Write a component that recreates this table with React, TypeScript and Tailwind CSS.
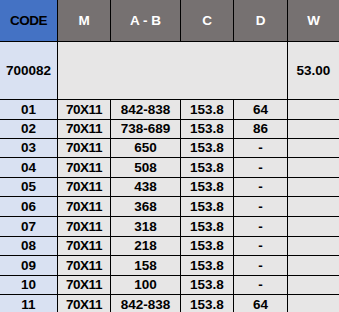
const rows = [
  { code: '01', m: '70X11', ab: '842-838', c: '153.8', d: '64', h: 'h-[19px]' },
  { code: '02', m: '70X11', ab: '738-689', c: '153.8', d: '86', h: 'h-[18px]' },
  { code: '03', m: '70X11', ab: '650', c: '153.8', d: '-', h: 'h-[18px]' },
  { code: '04', m: '70X11', ab: '508', c: '153.8', d: '-', h: 'h-[19px]' },
  { code: '05', m: '70X11', ab: '438', c: '153.8', d: '-', h: 'h-[18px]' },
  { code: '06', m: '70X11', ab: '368', c: '153.8', d: '-', h: 'h-[19px]' },
  { code: '07', m: '70X11', ab: '318', c: '153.8', d: '-', h: 'h-[19px]' },
  { code: '08', m: '70X11', ab: '218', c: '153.8', d: '-', h: 'h-[18px]' },
  { code: '09', m: '70X11', ab: '158', c: '153.8', d: '-', h: 'h-[19px]' },
  { code: '10', m: '70X11', ab: '100', c: '153.8', d: '-', h: 'h-[18px]' },
  { code: '11', m: '70X11', ab: '842-838', c: '153.8', d: '64', h: 'h-[19px]' },
];

const cell = 'flex items-center justify-center';

export default function App() {
  return (
    <div className="w-[339px] h-[312px] overflow-hidden bg-white font-['Liberation_Sans',Arial,sans-serif] text-[13.5px] font-bold leading-none text-black">
      <div className="grid grid-cols-[57px_52px_69px_52px_53px_51px] gap-px bg-black">
        {/* header */}
        <div className={`${cell} h-[41px] bg-[#4472C4] tracking-[-0.5px]`}>CODE</div>
        <div className={`${cell} bg-[#767171] text-white`}>M</div>
        <div className={`${cell} bg-[#767171] text-white`}>A - B</div>
        <div className={`${cell} bg-[#767171] text-white`}>C</div>
        <div className={`${cell} bg-[#767171] text-white`}>D</div>
        <div className={`${cell} bg-[#767171] text-white`}>W</div>

        {/* kit row */}
        <div className={`${cell} h-[57px] bg-[#D9E1F2]`}>700082</div>
        <div className="col-span-4 bg-[#E7E6E6]" />
        <div className={`${cell} bg-[#E7E6E6]`}>53.00</div>

        {rows.map((r) => (
          <div key={r.code} className="contents">
            <div className={`${cell} ${r.h} bg-[#D9E1F2]`}>{r.code}</div>
            <div className={`${cell} bg-[#E7E6E6] tracking-[-0.5px]`}>{r.m}</div>
            <div className={`${cell} bg-[#E7E6E6]`}>{r.ab}</div>
            <div className={`${cell} bg-[#E7E6E6]`}>{r.c}</div>
            <div className={`${cell} bg-[#E7E6E6]`}>{r.d}</div>
            <div className="bg-[#E7E6E6]" />
          </div>
        ))}
      </div>
    </div>
  );
}
